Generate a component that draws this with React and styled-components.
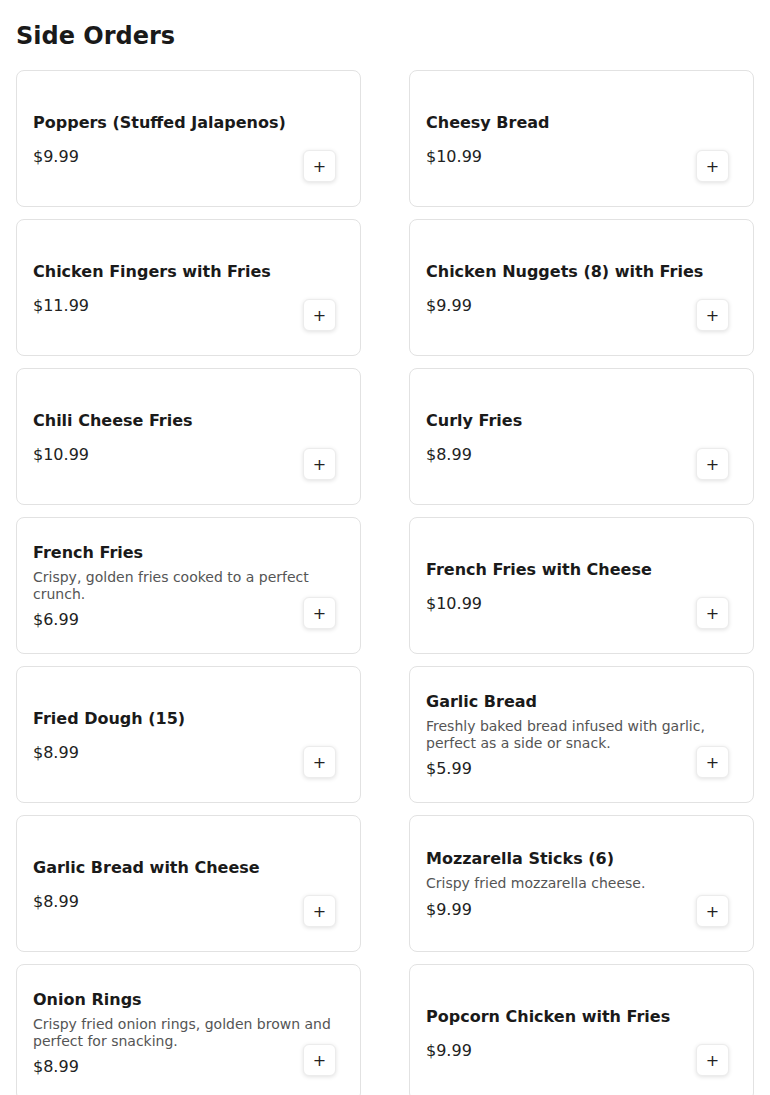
import React from 'react';
import styled, { createGlobalStyle } from 'styled-components';

const GlobalStyle = createGlobalStyle`
    * {
        box-sizing: border-box;
    }

    body {
        margin: 0;
        background: #ffffff;
        font-family: "DejaVu Sans", "Noto Sans", sans-serif;
        color: #1a1a1a;
    }
`;

const sideOrders = [
    { id: 1, name: 'Poppers (Stuffed Jalapenos)', price: 9.99 },
    { id: 2, name: 'Cheesy Bread', price: 10.99 },
    { id: 3, name: 'Chicken Fingers with Fries', price: 11.99 },
    { id: 4, name: 'Chicken Nuggets (8) with Fries', price: 9.99 },
    { id: 5, name: 'Chili Cheese Fries', price: 10.99 },
    { id: 6, name: 'Curly Fries', price: 8.99 },
    { id: 7, name: 'French Fries', price: 6.99, description: 'Crispy, golden fries cooked to a perfect crunch.' },
    { id: 8, name: 'French Fries with Cheese', price: 10.99 },
    { id: 9, name: 'Fried Dough (15)', price: 8.99 },
    { id: 10, name: 'Garlic Bread', price: 5.99, description: 'Freshly baked bread infused with garlic, perfect as a side or snack.' },
    { id: 11, name: 'Garlic Bread with Cheese', price: 8.99 },
    { id: 12, name: 'Mozzarella Sticks (6)', price: 9.99, description: 'Crispy fried mozzarella cheese.' },
    { id: 13, name: 'Onion Rings', price: 8.99, description: 'Crispy fried onion rings, golden brown and perfect for snacking.' },
    { id: 14, name: 'Popcorn Chicken with Fries', price: 9.99 },
];

function MenuCard({ item }) {
    return (
        <Card>
            <Info>
                <ItemName>{item.name}</ItemName>
                {item.description && <Description>{item.description}</Description>}
                <Price>${item.price.toFixed(2)}</Price>
            </Info>
            <AddButton aria-label={`Add ${item.name}`}>+</AddButton>
        </Card>
    );
}

function App() {
    return (
        <>
            <GlobalStyle />
            <Page>
                <Heading>Side Orders</Heading>
                <Grid>
                    {sideOrders.map((item) => (
                        <MenuCard key={item.id} item={item} />
                    ))}
                </Grid>
            </Page>
        </>
    );
}

const Page = styled.div`
    padding: 16px;
`;

const Heading = styled.h1`
    margin: 2px 0 16px;
    font-size: 24px;
    line-height: 36px;
    font-weight: 700;
    color: #1a1a1a;
`;

const Grid = styled.div`
    display: grid;
    grid-template-columns: 1fr 1fr;
    column-gap: 48px;
    row-gap: 12px;
`;

const Card = styled.div`
    position: relative;
    display: flex;
    align-items: center;
    height: 137px;
    padding: 16px;
    border: 1px solid #e2e2e2;
    border-radius: 8px;
    background: #fff;
`;

const Info = styled.div`
    display: flex;
    flex-direction: column;
    width: 100%;
    padding-top: 2px;
`;

const ItemName = styled.h3`
    margin: 0 0 4px;
    font-size: 16px;
    line-height: 24px;
    font-weight: 700;
    color: #1a1a1a;
`;

const Description = styled.p`
    margin: 0;
    font-size: 14px;
    line-height: 1.2;
    color: #555;
`;

const Price = styled.span`
    margin-top: 6px;
    font-size: 16px;
    line-height: 24px;
    color: #222;
`;

const AddButton = styled.button`
    position: absolute;
    right: 24px;
    bottom: 24px;
    width: 33px;
    height: 32px;
    display: flex;
    align-items: center;
    justify-content: center;
    padding: 0;
    border: 1px solid #ececec;
    border-radius: 6px;
    background: #fff;
    box-shadow: 0 1px 4px rgba(0, 0, 0, 0.12);
    font-family: "DejaVu Sans", sans-serif;
    font-size: 16px;
    color: #222;
    cursor: pointer;
`;

export default App;
